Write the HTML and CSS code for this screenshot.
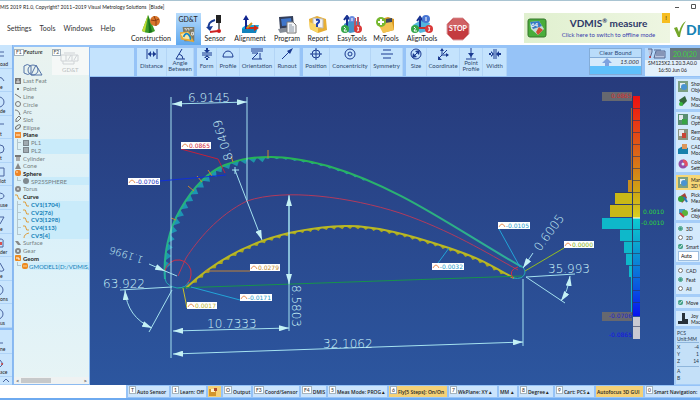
FILE: index.html
```html
<!DOCTYPE html>
<html lang="en">
<head>
  <meta charset="UTF-8" />
  <meta name="viewport" content="width=device-width, initial-scale=1" />
  <title>VDMIS - Blade</title>
  <link rel="stylesheet" href="styles.css">
</head>
<body>
  <header class="titlebar">
    <span class="title">MIS 2019 R1.0, Copyright? 2011~2019 Visual Metrology Solutions  [Blade]</span>
    <svg class="window-controls" width="26" height="8" viewBox="0 0 26 8"><path d="M1 4.500h4M17.500 1.500h4v4h-4z" fill="none" stroke="#555"/></svg>
  </header>

  <div class="topbar">
    <nav class="menu">
      <a href="#">Settings</a>
      <a href="#">Tools</a>
      <a href="#">Windows</a>
      <a href="#">Help</a>
    </nav>

    <div class="tools">
      <button class="tool">
        <svg width="20" height="19" viewBox="0 0 20 19"><path d="M7 0l7 16q-6 4-13 0z" fill="#3a9a28"/><path d="M7 0l-3 17-3-1z" fill="#c3dc35"/><path d="M7 0l1 18 3-1z" fill="#176d1c"/><circle cx="14" cy="6" r="5" fill="#d9752a"/><path d="M10 5q4 2 8-1M13 1q3 5 2 10" stroke="#8c3c12" fill="none"/></svg>
        <span>Construction</span>
      </button>
      <button class="tool active">
        <span>GD&amp;T</span>
        <svg width="20" height="18" viewBox="0 0 20 20"><path d="M4 1h13v16H6z" fill="#7c7967"/><path d="M6 3h2v2M9 3h2v2M12 3h3M14 7h2v3h-2z" stroke="#eee" fill="none"/><path d="M1 7l10-1 6 12-15-3z" fill="#e7ab36"/><path d="M2 9l8-2 4 8-9-1z" fill="#f9e6a3"/><path d="M5 12q3-6 6-2t1 5" stroke="#1285c7" stroke-width="2" fill="none"/></svg>
      </button>
      <button class="tool">
        <svg width="18" height="19" viewBox="0 0 18 19"><path d="M10 0h5v8h-5z" fill="#222"/><path d="M12 8h2v6h-2z" fill="#777"/><circle cx="13" cy="16" r="2" fill="#d31a1a"/><path d="M9 5Q1 7 3 14" stroke="#173a94" stroke-width="2" fill="none"/><path d="M0 12l7-1-3 5z" fill="#173a94"/><path d="M4 17l8-1" stroke="#ce2222" stroke-width="2"/></svg>
        <span>Sensor</span>
      </button>
      <button class="tool">
        <svg width="20" height="19" viewBox="0 0 20 19"><path d="M2 13l4-3h13l-3 8H2z" fill="#17a7dc"/><path d="M2 14h14v4H2z" fill="#1283bd"/><path d="M6 14V4" stroke="#10248f" stroke-width="2"/><path d="M6 0l3 5H3z" fill="#10248f"/><path d="M6 13h9" stroke="#d02b14" stroke-width="2"/><path d="M19 13l-5-3v6z" fill="#d02b14"/><path d="M7 13l5-5" stroke="#cf9523" stroke-width="2"/></svg>
        <span>Alignment</span>
      </button>
      <button class="tool">
        <svg width="20" height="19" viewBox="0 0 20 19"><path d="M2 2l14-1 1 11-14 2z" fill="#333e59"/><path d="M4 4l10-1 1 7-10 1z" fill="#3e75ca"/><path d="M1 14l12-2 2 4-12 2z" fill="#858d98"/><path d="M10 7h6l3 3v8h-9z" fill="#f4f5f7" stroke="#777"/><path d="M12 10h3M12 12h5M12 14h5M12 16h5" stroke="#8896a5"/></svg>
        <span>Program</span>
      </button>
      <button class="tool">
        <svg width="20" height="19" viewBox="0 0 20 19"><path d="M1 4l8-3 9 3 1 11-9 3-8-4z" fill="#e8af35"/><path d="M5 3l10 1v9L5 12z" fill="#f6f4f3" stroke="#bbb"/><path d="M1 7l9 3v8l-8-4z" fill="#f9d667"/><path d="M8 5q4-1 3 2l-2 2v3" stroke="#2043b0" stroke-width="2" fill="none"/></svg>
        <span>Report</span>
      </button>
      <button class="tool">
        <svg width="22" height="19" viewBox="0 0 22 19"><path d="M3 9l7-4 9 2v9l-10 2-6-3z" fill="#4392c9"/><path d="M6 16V3M3 5l3-4 3 4" stroke="#16308f" fill="none" stroke-width="2"/><path d="M17 2v12M14 3v12" stroke="#bc5361" stroke-width="2"/><circle cx="11" cy="4" r="3" fill="#6a8be0"/><path d="M11 3v3" stroke="#fff"/><circle cx="4" cy="14" r="4" fill="#35a748"/><circle cx="17" cy="14" r="4" fill="#d93939"/><path d="M3 12q3 1 0 4h3M16 12q3 0 1 2q2 2-1 2" stroke="#fff" fill="none"/></svg>
        <span>EasyTools</span>
      </button>
      <button class="tool">
        <svg width="20" height="19" viewBox="0 0 20 19"><path d="M5 4l7-2 6 2v11L7 18z" fill="#d79620"/><path d="M10 4l6-1v7l-6 1z" fill="#3b4760"/><path d="M2 9l14-2 2 8-11 3z" fill="#f3c351"/><circle cx="5" cy="7" r="5" fill="#76b82f"/><path d="M5 4v6M2 7h6" stroke="#fff" stroke-width="2"/></svg>
        <span>MyTools</span>
      </button>
      <button class="tool">
        <svg width="22" height="19" viewBox="0 0 22 19"><path d="M2 10l8-5 9 3-2 8-8 2z" fill="#52b5dd"/><path d="M9 13V4M6 6l3-4 3 4" stroke="#16308f" fill="none" stroke-width="2"/><path d="M7 13h9" stroke="#c13333" stroke-width="2"/><circle cx="15" cy="4" r="4" fill="#4776d4"/><path d="M15 2v4" stroke="#fff"/><circle cx="4" cy="14" r="4" fill="#35a748"/><circle cx="18" cy="14" r="4" fill="#d93939"/><path d="M3 12q3 1 0 4h3M17 12q3 0 1 2q2 2-1 2" stroke="#fff" fill="none"/></svg>
        <span>AlignTools</span>
      </button>
      <button class="tool stop" aria-label="Stop">
        <svg width="24" height="24" viewBox="0 0 24 24"><path d="M7 1h10l6 6v10l-6 6H7l-6-6V7z" fill="#c43b3f" stroke="#dda4a6"/><path d="M7 2h10l5 5v4H2V7z" fill="#d06264"/><text x="12" y="14" text-anchor="middle" class="stop-text">STOP</text></svg>
      </button>
    </div>

    <button class="banner">
      <svg width="20" height="20" viewBox="0 0 20 20"><rect x="1" y="1" width="18" height="18" rx="2" fill="#49ad3b" stroke="#36752d"/><path d="M3 4l9-1 5 8-6 6-7-6z" fill="#c8ddd9"/><path d="M3 4l9-1 3 5-9 3z" fill="#3679c4"/><path d="M12 9l4 3-5 5-2-3z" fill="#d04c35"/><text x="4" y="9" class="badge-64">64</text></svg>
      <span class="banner-text">
        <strong>VDMIS<sup>®</sup> measure</strong>
        <small>Click here to switch to offline mode</small>
      </span>
      <span class="banner-flag">!</span>
    </button>
    <div class="brand">
      <svg width="13" height="18" viewBox="0 0 13 18"><path d="M1 8l3-1 2 5Q8 4 13 1 8 8 7 17H5z" fill="#75a72b"/></svg>
      <b>DMIS</b>
    </div>
  </div>

  <div class="workspace">
    <aside class="shapes">
      <button><svg width="12" height="12" viewBox="0 0 12 12"><path d="M0 3h4M0 7h4" class="ink"/></svg>oad</button>
      <button><svg width="12" height="12" viewBox="0 0 12 12"><path d="M-4 11Q0 1 4 9" class="ink"/></svg>e</button>
      <button><svg width="12" height="12" viewBox="0 0 12 12"><circle cx="-1" cy="6" r="5" class="ink"/></svg>de</button>
      <button><svg width="12" height="12" viewBox="0 0 12 12"><path d="M0 5h4" class="ink"/></svg>t</button>
      <button><svg width="12" height="12" viewBox="0 0 12 12"><rect x="-5" y="2" width="9" height="8" rx="4" class="ink"/></svg>t</button>
      <button><svg width="12" height="12" viewBox="0 0 12 12"><path d="M0 2h4v8H0" class="ink"/></svg>lot</button>
      <button><svg width="12" height="12" viewBox="0 0 12 12"><ellipse cx="-1" cy="6" rx="5" ry="3" class="ink"/></svg>use</button>
      <button><svg width="12" height="12" viewBox="0 0 12 12"><path d="M0 3h4L0 10" class="ink"/></svg>e</button>
      <button><svg width="12" height="12" viewBox="0 0 12 12"><path d="M0 2q4 0 3 3v5H0" class="ink"/><path d="M0 5h2v3H0z" fill="#d94f4f"/></svg>der</button>
      <button><svg width="12" height="12" viewBox="0 0 12 12"><path d="M0 2l4 7q-2 2-4 1" class="ink"/></svg>e</button>
      <button><svg width="12" height="12" viewBox="0 0 12 12"><circle cx="-2" cy="6" r="5" class="ink"/></svg>ons</button>
      <button><svg width="12" height="12" viewBox="0 0 12 12"><circle cx="-2" cy="6" r="5" class="ink"/></svg>us</button>
      <button class="split"><svg width="12" height="12" viewBox="0 0 12 12"><path d="M0 9h3" class="ink"/></svg>ne</button>
      <button><svg width="12" height="12" viewBox="0 0 12 12"><path d="M0 3l3 4-3 3" class="ink"/><circle cx="2" cy="7" r="1" fill="#c44"/></svg>ace</button>
      <button class="scroll" aria-label="Scroll up"><svg width="8" height="6" viewBox="0 0 8 6"><path d="M1 4l3-3 3 3" class="ink"/></svg></button>
    </aside>

    <aside class="tree">
      <div class="tabs">
        <button class="tab"><span><kbd>F1</kbd><i>Feature</i></span>
          <svg width="20" height="14" viewBox="0 0 20 14"><g fill="none" stroke="#5575a8"><path d="M1 3v7q4 3 7 0V3Q4 0 1 3z"/><circle cx="10" cy="7" r="5"/><path d="M13 2l6 10H8z"/></g></svg>
        </button>
        <button class="tab off"><kbd>F2</kbd>
          <svg width="20" height="13" viewBox="0 0 20 13"><g fill="none" stroke="#cfd3d6"><path d="M1 3h17v6H1zM6 3v6M12 3v6M4 1h11M3 9v3h11V9M8 8l3-5M14 8l3-5"/></g></svg>
          <span>GD&amp;T</span>
        </button>
      </div>
      <ul class="features">
        <li><svg viewBox="0 0 6 6"><path d="M0 0h6v6H0z" fill="#777"/><path d="M1 4h4M3 1v4" stroke="#ddd"/></svg>Last Feat</li>
        <li><svg viewBox="0 0 6 6"><circle cx="3" cy="3" r="1" fill="#444"/></svg>Point</li>
        <li><svg viewBox="0 0 6 6"><path d="M0 1l6 4" class="grey"/></svg>Line</li>
        <li><svg viewBox="0 0 6 6"><circle cx="3" cy="3" r="2.500" class="grey"/></svg>Circle</li>
        <li><svg viewBox="0 0 6 6"><path d="M0 1q4 0 5 5" class="grey"/></svg>Arc</li>
        <li><svg viewBox="0 0 6 6"><path d="M1 3l3-3 2 2-3 3-2 1z" class="grey"/></svg>Slot</li>
        <li><svg viewBox="0 0 6 6"><ellipse cx="3" cy="3" rx="3" ry="1.500" transform="rotate(-40 3 3)" class="grey"/></svg>Ellipse</li>
        <li class="used"><svg viewBox="0 0 6 6"><path d="M0 0h6v6H0z" fill="#f08c32"/><path d="M1 2h4v2H1z" fill="#fbc083"/></svg>Plane</li>
        <li class="child plain"><svg viewBox="0 0 6 6"><path d="M0 0h6v6H0z" fill="#7b858c"/><path d="M1 2h4M1 4h4" stroke="#c5ced4"/></svg>PL1</li>
        <li class="child plain last"><svg viewBox="0 0 6 6"><path d="M0 0h6v6H0z" fill="#7b858c"/><path d="M1 2h4M1 4h4" stroke="#c5ced4"/></svg>PL2</li>
        <li><svg viewBox="0 0 6 6"><path d="M1 1h4v5H1z" fill="#aaa"/><path d="M0 0h6v2H0z" fill="#777"/></svg>Cylinder</li>
        <li><svg viewBox="0 0 6 6"><path d="M3 0l3 6H0z" fill="#888"/></svg>Cone</li>
        <li class="used"><svg viewBox="0 0 6 6"><rect width="6" height="6" rx="2" fill="#ef8627"/><circle cx="2" cy="2" r="1" fill="#ffc68e"/></svg>Sphere</li>
        <li class="child plain last"><svg viewBox="0 0 6 6"><circle cx="3" cy="3" r="3" fill="#7f898e"/></svg>SP25SPHERE</li>
        <li><svg viewBox="0 0 6 6"><circle cx="3" cy="3" r="3" fill="#888"/><circle cx="3" cy="3" r="1" fill="#ddd"/></svg>Torus</li>
        <li class="used"><svg viewBox="0 0 6 6"><path d="M0 1q3-1 3 2t3 2" class="orange"/></svg>Curve</li>
        <li class="child"><svg viewBox="0 0 6 6"><path d="M0 1q3-1 3 2t3 2" class="orange"/></svg>CV1(1704)</li>
        <li class="child"><svg viewBox="0 0 6 6"><path d="M0 1q3-1 3 2t3 2" class="orange"/></svg>CV2(76)</li>
        <li class="child"><svg viewBox="0 0 6 6"><path d="M0 1q3-1 3 2t3 2" class="orange"/></svg>CV3(1298)</li>
        <li class="child"><svg viewBox="0 0 6 6"><path d="M0 1q3-1 3 2t3 2" class="orange"/></svg>CV4(113)</li>
        <li class="child last"><svg viewBox="0 0 6 6"><path d="M1 6q0-4 5-5" class="orange"/></svg>CV5[4]</li>
        <li><svg viewBox="0 0 6 6"><path d="M0 1l3 0 3 4H3z" fill="#888"/></svg>Surface</li>
        <li><svg viewBox="0 0 6 6"><circle cx="3" cy="3" r="2" fill="none" stroke="#888" stroke-width="2"/></svg>Gear</li>
        <li class="used"><svg viewBox="0 0 6 6"><rect width="6" height="6" rx="1" fill="#ed8a20"/><path d="M1 3h3v2" stroke="#fff" fill="none"/></svg>Geom</li>
        <li class="child last"><svg viewBox="0 0 6 6"><rect width="6" height="6" rx="2" fill="#ed8a20"/><path d="M1 3h4" stroke="#fbd29b"/></svg>GMODEL1(D:/VDMIS/SA</li>
      </ul>
      <div class="hscroll"><span>&lt;</span><div class="thumb"></div><span>&gt;</span></div>
    </aside>

    <div class="center">
      <div class="ribbon">
        <div class="group empty"></div>
        <div class="group dist">
          <button><svg viewBox="0 0 12 12"><path d="M1 1v10M11 1v10M2 6h8" class="navy"/><path d="M2 6l3-3v6zM10 6L7 3v6z" fill="#1b3a90"/></svg>Distance</button>
          <button class="two"><svg viewBox="0 0 12 12"><path d="M8 1L2 11h9M5 6q4 1 4 5" class="navy"/></svg>Angle Between</button>
        </div>
        <div class="group form">
          <button><svg viewBox="0 0 12 12"><path d="M1 5h10M1 7h10" class="navy"/><path d="M6 5L3 2h6zM6 7l-3 3h6zM5 0h2v3H5zM5 9h2v3H5z" fill="#1b3a90"/></svg>Form</button>
          <button><svg viewBox="0 0 12 12"><path d="M1 9a5 6 0 0 1 10 0z" class="navy"/></svg>Profile</button>
          <button><svg viewBox="0 0 12 12"><path d="M0 1h12M0 3h12M1 5h6L1 11h10M9 5v6" class="navy"/></svg>Orientation</button>
          <button><svg viewBox="0 0 12 12"><path d="M1 11l8-8" class="navy"/><path d="M12 0L9 6 6 3z" fill="#1b3a90"/></svg>Runout</button>
        </div>
        <div class="group pos">
          <button><svg viewBox="0 0 12 12"><circle cx="6" cy="6" r="4" class="navy"/><path d="M6 0v12M0 6h12" class="navy"/></svg>Position</button>
          <button><svg viewBox="0 0 12 12"><circle cx="6" cy="6" r="5" class="navy"/><circle cx="6" cy="6" r="2" class="navy"/></svg>Concentricity</button>
          <button><svg viewBox="0 0 12 12"><path d="M2 2h8M0 6h12M2 10h8" class="navy"/></svg>Symmetry</button>
        </div>
        <div class="group size">
          <button><svg viewBox="0 0 12 12"><circle cx="6" cy="6" r="5" class="navy"/><path d="M3 9l6-6" class="navy"/><path d="M10 2L9 7 5 3zM2 10l1-5 4 4z" fill="#1b3a90"/></svg>Size</button>
          <button><svg viewBox="0 0 12 12"><path d="M5 7V1M5 7h6M5 7l-4 4M6 6l4-4" class="navy"/><path d="M3 3l2-3 2 3zM9 5l3 2-3 2zM1 8v4h4z" fill="#1b3a90"/></svg>Coordinate</button>
          <button class="two"><svg viewBox="0 0 12 12"><path d="M6 0v10M1 11h10" class="navy"/><path d="M6 9L3 5h6z" fill="#1b3a90"/></svg>Point Profile</button>
          <button><svg viewBox="0 0 12 12"><path d="M5 1v10M7 1v10" class="navy"/><path d="M5 6L2 3v6zM7 6l3-3v6zM0 5h3v2H0zM9 5h3v2H9z" fill="#1b3a90"/></svg>Width</button>
        </div>
        <div class="clear-bound">
          <div>Clear Bound</div>
          <label><svg width="10" height="8" viewBox="0 0 10 8"><path d="M5 0l5 5H7v3H3V5H0z" fill="#7ea2df"/></svg><input type="text" value="15.000" aria-label="Clear bound"></label>
        </div>
        <div class="probe">
          <div class="probe-top">
            <svg width="20" height="11" viewBox="0 0 20 11"><path d="M1 1h4v3l-2 6M9 3h9v7H7z" fill="#b8c5df" stroke="#546790"/><path d="M7 2h7M9 5h8M9 7h8" stroke="#546790"/><circle cx="3" cy="9" r="1" fill="#c33"/></svg>
            <output>20.0(20</output>
          </div>
          <p>SM125X2.1.20.3.A0.0</p>
          <p>16:50 Jun 06</p>
        </div>
      </div>

      <div class="stage">
        <svg class="view" viewBox="90 77 584 308" preserveAspectRatio="xMinYMin slice">
          <defs>
            <linearGradient id="warm" x1="0" y1="0" x2="0" y2="1">
              <stop offset="0" stop-color="#f01010"/><stop offset="0.500" stop-color="#d96a18"/><stop offset="0.800" stop-color="#cfa814"/><stop offset="1" stop-color="#d8d020"/>
            </linearGradient>
            <linearGradient id="cold" x1="0" y1="0" x2="0" y2="1">
              <stop offset="0" stop-color="#0ccbd0"/><stop offset="0.300" stop-color="#0b9fd0"/><stop offset="0.700" stop-color="#0a58e0"/><stop offset="1" stop-color="#0612ee"/>
            </linearGradient>
            <linearGradient id="upperStroke" x1="0" y1="0" x2="1" y2="0">
              <stop offset="0" stop-color="#27b38c"/><stop offset="0.200" stop-color="#27b456"/><stop offset="0.400" stop-color="#27b456"/><stop offset="1" stop-color="#2fae9d"/>
            </linearGradient>
            <marker id="arrow" viewBox="0 0 10 6" refX="10" refY="3" markerWidth="10" markerHeight="6" markerUnits="userSpaceOnUse" orient="auto-start-reverse"><path d="M0 0l10 3-10 3z" fill="#c4f1f5"/></marker>
          </defs>

          <g id="teeth"></g>
          <path id="upper" class="upper" d="M165 279C163 255 169 229 180 210S207 172 225 165 254 157 271 157 305 160 328 166C400 187 458 231 522 267"/>
          <path id="lower" class="lower" d="M186 288C205 270 232 252 262 241S318 227 345 226 408 234 449 248 490 266 514 278"/>
          <path class="camber" d="M178 276L186 258C197 241 218 215 247 201 285 188 350 197 400 213 450 230 487 253 518 270"/>
          <path d="M178 288l344-12" class="chord"/>
          <path d="M165 271a13 13 0 0 1 26 4q0 5-4 9" class="red-arc"/>
          <path d="M165 271q-3 15 12 17 9 0 12-6" class="teal-arc"/>
          <path d="M513 278q-5-8 5-11" class="red-arc"/>
          <path d="M513 278q10 2 12-5 0-6-6-8" class="teal-arc"/>
          <path d="M171 218l5 2M188 186l6 5M197 176l5 6M208 170l4 6M231 156l2 6M268 150v8" class="ticks"/>

          <g class="dims">
            <path d="M171 97v261M247 97v103M289 195v136M523 279v67"/>
            <path d="M120 290l52-3M172 290l-23 42M526 277l49-3M526 277l39 26"/>
            <path d="M172 104l75-2" class="both"/>
            <path d="M235 170l27 70" class="end"/>
            <path d="M289 196v88" class="both"/>
            <path d="M173 331l116-3" class="both"/>
            <path d="M173 354l350-12" class="both"/>
            <path d="M125 290q2 27 27 38" class="both"/>
            <path d="M570 276q-2 15-9 25" class="both"/>
            <path d="M533 253l-10 15" class="end"/>
            <path d="M149 264l16 7" class="end"/>
            <path d="M165 271l12 5M232 170h7M235 167v7"/>
          </g>
          <g class="dim-text">
            <text x="188" y="102">6.9145</text>
            <text transform="translate(233 159) rotate(-107)">8.0469</text>
            <text x="103" y="288">63.922</text>
            <text transform="translate(144 257) rotate(198)" class="radius">1.1996</text>
            <text x="207" y="328">10.7333</text>
            <text transform="translate(292 285) rotate(90)">8.5803</text>
            <text x="323" y="348">32.1062</text>
            <text transform="translate(540 252) rotate(-54)">0.6005</text>
            <text x="548" y="273">35.993</text>
          </g>

          <g class="leaders">
            <path d="M181 149l37 10 7 14" stroke="#c2213c"/>
            <path d="M160 181l66-6" stroke="#1030d8"/>
            <path d="M250 271h-45" stroke="#bf8137"/>
            <path d="M240 300l-49-13" stroke="#22a4d8"/>
            <path d="M187 308l-4-20" stroke="#c8c02c"/>
            <path d="M499 229l21 38" stroke="#22a4d8"/>
            <path d="M564 248l-39 23" stroke="#94bd21"/>
            <path d="M438 263l11-15" stroke="#22a4d8"/>
          </g>
          <g id="callouts"></g>

          <g>
            <path d="M602 218h30v11h-30zM620 229h12v12h-12zM624 241h8v12h-8zM626 253h6v12h-6zM629 265h3v12h-3zM631 277h1v38h-1z" fill="#0eb8ca"/>
            <path d="M631 108h1v72h-1z" fill="#a9692d"/>
            <path d="M628 180h4v12h-4z" fill="#c88e1e"/>
            <path d="M615 193h17v11h-17zM610 205h22v12h-22z" fill="#c9b817"/>
            <path d="M633 96h7v122h-7z" fill="url(#warm)"/>
            <path d="M633 218h7v98h-7z" fill="url(#cold)"/>
            <path d="M633 317h7v22h-7z" fill="#c9c9d2"/>
            <path d="M602 92h30v9h-30zM602 312h30v9h-30z" fill="#66686f"/>
            <path d="M632.500 96v219M633 108.500h7M633 120.500h7M633 132.500h7M633 144.500h7M633 156.500h7M633 168.500h7M633 180.500h7M615 192.500h25M610 204.500h30M620 229.500h20M624 241.500h16M626 253.500h14M629 265.500h11M633 277.500h7M633 290.500h7M633 302.500h7M633 326.500h7" stroke="#2b3658" stroke-opacity="0.600"/>
            <path d="M633 218h7" stroke="#fff"/>
            <text x="632" y="98" class="scale end-text" fill="#d92e2e">0.0865</text>
            <text x="643" y="214" class="scale" fill="#2cd33c">0.0010</text>
            <text x="641" y="225" class="scale" fill="#2cd33c">-0.0010</text>
            <text x="632" y="318" class="scale end-text" fill="#2426c8">-0.0706</text>
            <text x="632" y="337" class="scale end-text" fill="#1414e6">-0.0865</text>
          </g>
        </svg>

        <aside class="options">
          <div class="box">
            <button><svg viewBox="0 0 10 11"><path d="M0 0h10v11H0z" fill="#7c9f83"/><path d="M2 2h5v5H2z" fill="#e6eef2"/><circle cx="6" cy="6" r="3" fill="#4993d2"/></svg><span>Show<br>Objects</span></button>
            <button><svg viewBox="0 0 10 11"><path d="M1 4l6-4 2 5-5 5z" fill="#35663e"/><circle cx="3" cy="8" r="2" fill="#35b33c"/></svg><span>Move<br>Machine</span></button>
          </div>
          <div class="box">
            <button><svg viewBox="0 0 10 11"><path d="M0 0h10v11H0z" fill="#5a8e72"/><path d="M1 1h4v5H1z" fill="#e2e8ed"/><path d="M4 5h5v5H4z" fill="#39a545"/></svg><span>Graphic<br>Options</span></button>
            <button><svg viewBox="0 0 10 11"><path d="M0 0h10v11H0z" fill="#899481"/><path d="M1 1h5v6H1z" fill="#e2e8ed"/><path d="M4 4h4v5H4z" fill="#c94435"/></svg><span>Remove<br>Graphics</span></button>
            <button><svg viewBox="0 0 10 11"><path d="M0 5l5-3 5 2v6H0z" fill="#187fab"/><path d="M4 0h5v5H4z" fill="#dc965b"/></svg><span>CAD<br>Model</span></button>
            <button><svg viewBox="0 0 10 11"><circle cx="5" cy="5" r="3" fill="none" stroke="#924da8" stroke-width="3"/><path d="M5 2q4 0 3 5" fill="none" stroke="#e15064" stroke-width="3"/></svg><span>Color<br>Settings</span></button>
          </div>
          <div class="box">
            <button class="on"><svg viewBox="0 0 10 11"><path d="M0 0h10v11H0z" fill="#7c9f83"/><path d="M2 2h5v5H2z" fill="#e6eef2"/><circle cx="6" cy="6" r="3" fill="#4993d2"/></svg><span>Manual<br>3D View</span></button>
            <button><svg viewBox="0 0 10 11"><path d="M1 5l6-4 2 5-5 5z" fill="#a54438"/><circle cx="3" cy="7" r="3" fill="#35a33c"/><path d="M6 5l3 5" stroke="#267ab7" stroke-width="2"/></svg><span>Pick<br>Measure</span></button>
            <button><svg viewBox="0 0 10 11"><path d="M1 2h6v5H1z" fill="#4b9bc1"/><circle cx="7" cy="6" r="3" fill="#5bb33c"/><path d="M2 6l4 4" stroke="#c93b34" stroke-width="2"/></svg><span>Select<br>Objects</span></button>
          </div>
          <div class="box checks">
            <label><input type="radio" name="dim" checked>3D</label>
            <label><input type="radio" name="dim">2D</label>
            <label><input type="checkbox" checked>Smart</label>
            <select aria-label="Mode"><option>Auto</option></select>
          </div>
          <div class="box checks">
            <label><input type="radio" name="snap">CAD</label>
            <label><input type="radio" name="snap" checked>Feat</label>
            <label><input type="radio" name="snap">All</label>
          </div>
          <div class="box checks">
            <label><input type="checkbox" checked>Move</label>
          </div>
          <div class="box joy">
            <button><svg viewBox="0 0 10 11"><path d="M4 0h3v6h3v5H0V8h4z" fill="#27313a"/></svg><span>Joy<br>Mach</span></button>
          </div>
          <div class="readout">
            <p>PCS<br>Unit:MM</p>
            <dl><dt>X</dt><dd>-4</dd><dt>Y</dt><dd>1</dd><dt>Z</dt><dd>14</dd></dl>
            <dl><dt>A</dt><dd></dd><dt>B</dt><dd></dd></dl>
          </div>
        </aside>
      </div>
    </div>
  </div>

  <footer class="status">
    <button><kbd>T</kbd>Auto Sensor</button>
    <button><kbd>1</kbd>Learn: Off</button>
    <button class="lit" aria-label="Save"><svg width="8" height="8" viewBox="0 0 8 8"><path d="M0 1h7v7H0z" fill="#d3952c"/><path d="M2 1h4v3H2z" fill="#fff1c5"/><path d="M5 0h3v3H5z" fill="#b04b31"/></svg></button>
    <button><kbd>O</kbd>Output</button>
    <button><kbd>F3</kbd>Coord/Sensor</button>
    <button><kbd>F4</kbd>DMIS</button>
    <button><kbd>5</kbd>Meas Mode: PROG ▴</button>
    <button class="lit"><kbd>6</kbd>Fly[5 Steps]: On/On</button>
    <button><kbd>7</kbd>WkPlane: XY ▴</button>
    <button>MM ▴</button>
    <button><kbd>8</kbd>Degree ▴</button>
    <button><kbd>9</kbd>Cart: PCS ▴</button>
    <button class="lit">Autofocus 3D GUI</button>
    <button><kbd>0</kbd>Smart Navigation:</button>
  </footer>

  <script>
    const NS = "http://www.w3.org/2000/svg";

    function add(parent, tag, attrs, text) {
      const el = document.createElementNS(NS, tag);
      for (const key in attrs) el.setAttribute(key, attrs[key]);
      if (text) el.textContent = text;
      parent.appendChild(el);
      return el;
    }

    // deviation whiskers on the inner side of a profile curve
    function drawTeeth(id, from, to, step, height, fill) {
      const path = document.getElementById(id);
      const total = path.getTotalLength();
      for (let s = total * from; s < total * to; s += step) {
        const a = path.getPointAtLength(s);
        const b = path.getPointAtLength(s + step);
        const nx = -(b.y - a.y) / step * height;
        const ny = (b.x - a.x) / step * height;
        add(document.getElementById("teeth"), "path", {
          d: `M${a.x} ${a.y}L${a.x * 0.4 + b.x * 0.6 + nx} ${a.y * 0.4 + b.y * 0.6 + ny}L${b.x} ${b.y}z`,
          fill: fill
        });
      }
    }

    drawTeeth("upper", 0.02, 0.27, 9, 6, "#1d94b4");
    drawTeeth("upper", 0.27, 0.38, 9, 5, "#1d94a8");
    drawTeeth("upper", 0.38, 0.6, 9, 2, "#249da3");
    drawTeeth("lower", 0.02, 0.97, 8, 3, "#a6a51f");

    const callouts = [
      [181, 142, 30, "0.0865", "#cf2438"],
      [128, 178, 32, "-0.0706", "#1b32c4"],
      [250, 264, 30, "0.0279", "#c2882c"],
      [240, 294, 32, "-0.0171", "#1f9bcc"],
      [187, 302, 30, "0.0017", "#bdb52c"],
      [498, 222, 32, "-0.0105", "#1f9bcc"],
      [564, 241, 30, "0.0000", "#86b022"],
      [432, 263, 32, "-0.0032", "#1f9bcc"]
    ];
    const layer = document.getElementById("callouts");
    callouts.forEach(([x, y, w, text, color]) => {
      add(layer, "rect", { x: x, y: y, width: w, height: 7, fill: "#fff" });
      add(layer, "path", { d: `M${x + 1} ${y + 5}q3-6 6 0`, fill: "none", stroke: "#e8945c" });
      add(layer, "text", { x: x + w - 1, y: y + 6, fill: color, class: "callout" }, text);
    });
  </script>
</body>
</html>
```
FILE: styles.css
```css
* {
  box-sizing: border-box;
}

body {
  margin: 0;
  height: 100vh;
  display: flex;
  flex-direction: column;
  overflow: hidden;
  background: #fff;
  color: #222;
  font-family: Lato, "Open Sans", sans-serif;
  font-size: 6px;
}

button {
  border: none;
  background: none;
  padding: 0;
  margin: 0;
  font: inherit;
  color: inherit;
  cursor: pointer;
}

svg {
  display: block;
  flex: none;
}

p, ul, dl, dd {
  margin: 0;
  padding: 0;
}

/* title + menu */

.titlebar {
  height: 13px;
  flex: none;
  display: flex;
  justify-content: space-between;
  align-items: center;
  border-top: 1px solid #a9c4d2;
  font-size: 5px;
}

.title {
  white-space: pre;
}

.topbar {
  height: 32px;
  flex: none;
  display: flex;
}

.menu {
  flex: 0 0 130px;
  display: flex;
  gap: 8px;
  padding: 11px 0 0 7px;
}

.menu a {
  color: #333;
  font-size: 7px;
  line-height: 9px;
  text-decoration: none;
}

.tools {
  flex: none;
  display: grid;
  grid-template-columns: 42px 32px 22px 48px 26px 36px 32px 36px 36px 36px;
}

.tool {
  display: flex;
  flex-direction: column;
  align-items: center;
  justify-content: center;
  font-size: 7px;
  line-height: 9px;
  white-space: nowrap;
}

.tool.active {
  justify-self: center;
  width: 25px;
  gap: 2px;
  background: linear-gradient(#b8dcfc, #5ea8ef);
}

.stop-text {
  font: bold 7px Lato, sans-serif;
  fill: #fff;
}

.banner {
  position: relative;
  flex: 0 0 146px;
  height: 30px;
  margin-left: 48px;
  padding-left: 3px;
  display: flex;
  align-items: center;
  background: linear-gradient(90deg, #e0f0cf, #eef6e2);
}

.banner-text {
  flex: 1;
  display: flex;
  flex-direction: column;
  align-items: center;
}

.banner strong {
  color: #2d3767;
  font-size: 10px;
  line-height: 14px;
}

.banner sup {
  font-size: 6px;
  line-height: 1px;
}

.banner small {
  color: #3c3fae;
  font-size: 6px;
  line-height: 10px;
}

.banner-flag {
  position: absolute;
  top: 0;
  right: 0;
  width: 8px;
  line-height: 10px;
  background: #f6bd20;
}

.badge-64 {
  font: bold 6px Lato, sans-serif;
  fill: #fff;
}

.brand {
  display: flex;
  align-items: center;
  padding-left: 3px;
  color: #1683b5;
  font-size: 14px;
  font-weight: 900;
}

/* workspace */

.workspace {
  flex: 1;
  min-height: 0;
  display: flex;
  background: #96c3f7;
}

.shapes {
  flex: 0 0 13px;
  display: flex;
  flex-direction: column;
  overflow: hidden;
  border-right: 1px solid #86b8f2;
  background: #c9e5fd;
}

.shapes button {
  flex: 1;
  min-height: 0;
  display: flex;
  flex-direction: column;
  align-items: flex-start;
  justify-content: flex-end;
  border-bottom: 1px solid #b0d4f7;
  font-size: 5px;
  line-height: 7px;
}

.shapes .split {
  border-top: 2px solid #8bbcf4;
}

.shapes .scroll {
  flex: 0 0 8px;
  align-items: center;
}

.ink {
  fill: none;
  stroke: #4a64a0;
}

.tree {
  flex: 0 0 77px;
  display: flex;
  flex-direction: column;
  margin-top: 2px;
  border: 1px solid #8cbaf0;
  border-width: 0 1px 1px;
  background: linear-gradient(#eaf3ef, #d9f0fa 50%, #e7f4f5);
}

.tabs {
  display: grid;
  grid-template-columns: 1fr 1fr;
}

.tab {
  height: 30px;
  display: flex;
  flex-direction: column;
  align-items: center;
  justify-content: space-between;
  font-size: 6px;
  line-height: 10px;
}

.tab > span {
  align-self: flex-start;
}

.tab.off {
  position: relative;
  height: 28px;
  justify-content: flex-end;
  background: #f5f8f7;
  color: #b9bec0;
}

.tab.off > span {
  align-self: center;
}

.tab.off kbd {
  position: absolute;
  top: 2px;
  left: 0;
}

kbd {
  display: inline-block;
  padding: 0 1px;
  border: 1px solid #a5b4bd;
  background: #fff;
  color: #444;
  font-family: Lato, sans-serif;
  font-size: 5px;
  line-height: 5px;
}

.features {
  height: 193px;
  display: grid;
  grid-auto-rows: 1fr;
  list-style: none;
  color: #767f82;
  line-height: 7px;
}

.features li {
  display: flex;
  align-items: center;
  gap: 2px;
  padding-left: 1px;
  white-space: nowrap;
  overflow: hidden;
}

.features svg {
  width: 6px;
  height: 6px;
}

.features .used {
  color: #222;
  font-weight: bold;
}

.features .child {
  padding-left: 3px;
  color: #1480b8;
  background: linear-gradient(90deg, transparent 4px, #c9ebfa 30px);
  font-weight: bold;
}

.features .child::before {
  content: "";
  flex: none;
  width: 3px;
  height: 100%;
  border-left: 1px solid #b3c6ce;
  background: linear-gradient(#b3c6ce, #b3c6ce) center / 100% 1px no-repeat;
}

.features .last::before {
  height: 50%;
  align-self: flex-start;
  background-position: bottom;
}

.features .plain {
  color: #767f82;
  font-weight: normal;
}

.features .used + .last:last-child {
  font-weight: normal;
  gap: 1px;
}

.grey {
  fill: none;
  stroke: #777;
}

.orange {
  fill: none;
  stroke: #dd9d3d;
}

.hscroll {
  margin-top: auto;
  height: 7px;
  display: flex;
  align-items: center;
  padding: 0 2px;
  gap: 2px;
  background: #eff2f2;
}

.thumb {
  width: 30px;
  height: 5px;
  margin-right: auto;
  background: #c7c9ca;
}

.center {
  flex: 1;
  min-width: 0;
  display: flex;
  flex-direction: column;
}

/* ribbon */

.ribbon {
  height: 32px;
  flex: none;
  display: flex;
  gap: 3px;
  padding: 3px 0 1px;
  overflow: hidden;
}

.group {
  flex: none;
  display: grid;
  background: #c4e3fd;
}

.empty {
  width: 44px;
}

.dist {
  grid-template-columns: 30px 27px;
}

.form {
  grid-template-columns: 20px 23px 35px 25px;
}

.pos {
  grid-template-columns: 27px 41px 32px;
}

.size {
  grid-template-columns: 21px 33px 23px 24px;
}

.group button {
  display: flex;
  flex-direction: column;
  align-items: center;
  gap: 3px;
  border-right: 1px solid #b3d5f6;
  color: #2f4a70;
  line-height: 6px;
}

.group .two {
  gap: 0;
}

.group svg {
  width: 12px;
  height: 12px;
}

.navy {
  fill: none;
  stroke: #1b3a90;
}

.clear-bound {
  flex: 0 0 53px;
  height: 27px;
  margin-left: auto;
  border: 1px solid #83acd8;
  background: #5fc0fb;
  color: #2c4b78;
  text-align: center;
  line-height: 8px;
}

.clear-bound div {
  background: #b9dcfa;
}

.clear-bound label {
  display: flex;
  align-items: center;
  justify-content: space-between;
  padding: 0 2px 0 12px;
  border-top: 1px solid #83acd8;
  background: #d5eafb;
}

.clear-bound input {
  width: 22px;
  padding: 0;
  border: none;
  background: none;
  color: #334;
  font: italic 6px/8px Lato, sans-serif;
  text-align: right;
}

.probe {
  flex: 0 0 55px;
  overflow: hidden;
  background: #e2f0fc;
  font-size: 5px;
  line-height: 7px;
  text-align: center;
  white-space: nowrap;
}

.probe-top {
  display: flex;
  gap: 3px;
  padding-left: 2px;
  background: #b5d8fa;
}

.probe output {
  flex: 1;
  background: #667780;
  color: #3fd13a;
  font-size: 7px;
  line-height: 12px;
  text-align: left;
  padding-left: 3px;
}

/* graphics view */

.stage {
  flex: 1;
  min-height: 0;
  display: flex;
}

.view {
  flex: 1;
  min-width: 0;
  height: 100%;
  background: linear-gradient(#273b7c, #2c569f);
}

.upper {
  fill: none;
  stroke: url(#upperStroke);
  stroke-width: 2;
}

.lower {
  fill: none;
  stroke: #b9b824;
  stroke-width: 2;
}

.camber {
  fill: none;
  stroke: #b23a5c;
}

.chord {
  stroke: #17934b;
}

.red-arc {
  fill: none;
  stroke: #d22e45;
}

.teal-arc {
  fill: none;
  stroke: #25a9b4;
}

.ticks {
  stroke: #c8852f;
}

.dims path {
  fill: none;
  stroke: #a5e2f0;
}

.dims .both {
  marker-start: url(#arrow);
  marker-end: url(#arrow);
}

.dims .end {
  marker-end: url(#arrow);
}

.dim-text {
  fill: #cdf5fa;
  font-family: "DejaVu Sans Light", "DejaVu Sans", sans-serif;
  font-size: 12px;
  font-weight: 200;
}

.dim-text .radius {
  font-size: 10px;
}

.leaders path {
  fill: none;
}

.callout {
  font: 6px "DejaVu Sans", sans-serif;
  text-anchor: end;
}

.scale {
  font: 6px "DejaVu Sans", sans-serif;
}

.end-text {
  text-anchor: end;
}

/* right panel */

.options {
  flex: 0 0 26px;
  overflow: hidden;
  display: flex;
  flex-direction: column;
  gap: 3px;
  padding: 2px 0 2px 2px;
  background: #a5cdf8;
  font-size: 5px;
  line-height: 6px;
  white-space: nowrap;
}

.box {
  background: #d4eafc;
}

.box button {
  width: 100%;
  height: 15px;
  display: flex;
  align-items: center;
  gap: 3px;
  padding-left: 2px;
  text-align: left;
}

.box button svg {
  width: 10px;
  height: 11px;
}

.box .on {
  background: #f6d777;
}

.checks {
  padding: 1px 2px;
}

.checks label {
  height: 9px;
  display: flex;
  align-items: center;
  gap: 3px;
}

.checks input {
  flex: none;
  width: 5px;
  height: 5px;
  margin: 0;
  accent-color: #3c9c84;
}

.checks select {
  width: 21px;
  height: 10px;
  padding: 0 2px;
  border: 1px solid #9fbfe0;
  background: #fff;
  font: inherit;
  appearance: none;
}

.readout {
  flex: 1;
  padding: 1px;
  background: #c4e0f8;
  color: #24364c;
}

.readout dl {
  display: grid;
  grid-template-columns: 10px 1fr;
  padding: 1px 0;
  border-top: 1px solid #8fb6dc;
  line-height: 7px;
}

.readout dd {
  text-align: right;
}

/* status bar */

.status {
  flex: none;
  height: 15px;
  display: grid;
  grid-template-columns: 41px 35px 13px 28px 46px 25px 59px 58px 48px 18px 34px 39px 47px 1fr;
  gap: 2px;
  padding: 1px 0 1px 128px;
  overflow: hidden;
  border-bottom: 2px solid #6eaaf0;
  background: linear-gradient(90deg, #fff 126px, #96c3f7 126px);
}

.status button {
  display: flex;
  align-items: center;
  gap: 1px;
  padding: 0 1px;
  overflow: hidden;
  background: #cbe4fc;
  font-family: "Open Sans", sans-serif;
  font-size: 5px;
  font-weight: 600;
  white-space: nowrap;
}

.status kbd {
  align-self: flex-start;
  line-height: 6px;
}

.status .lit {
  background: #f5d176;
}
```
